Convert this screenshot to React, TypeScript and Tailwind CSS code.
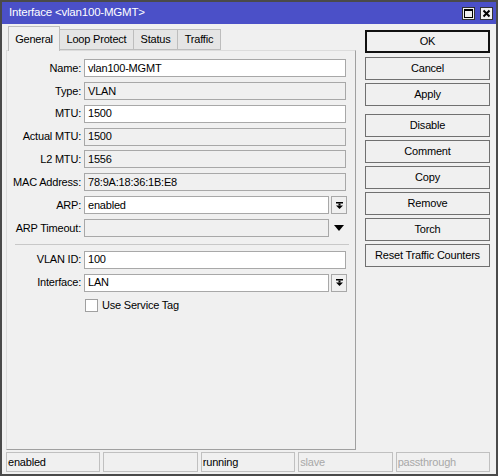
import React from "react";

const font = { fontFamily: '"Liberation Sans", Arial, sans-serif' };

function DropIcon() {
  return (
    <svg width="9" height="9" viewBox="0 0 9 9">
      <rect x="1" y="1" width="7" height="1.5" fill="#000" />
      <rect x="3.5" y="2.5" width="2" height="2" fill="#000" />
      <polygon points="1,4.5 8,4.5 4.5,8" fill="#000" />
    </svg>
  );
}

function Row({
  label,
  value,
  editable,
  drop,
  arrow,
}: {
  label: string;
  value: string;
  editable?: boolean;
  drop?: boolean;
  arrow?: boolean;
}) {
  return (
    <div className="flex items-center h-[18px]">
      <div className="w-[77px] text-right pr-[3px] whitespace-nowrap text-[#000]">{label}</div>
      <div
        className={`h-[18px] flex items-center px-[3px] border border-[#a8a8a8] ${
          editable ? "bg-white" : "bg-[#f0f0f0]"
        } ${drop || arrow ? "w-[245px]" : "w-[262px]"}`}
      >
        {value}
      </div>
      {drop && (
        <div className="ml-[2px] w-[16px] h-[18px] border border-[#a8a8a8] flex items-center justify-center">
          <DropIcon />
        </div>
      )}
      {arrow && (
        <div className="ml-[2px] w-[16px] h-[18px] flex items-center justify-center">
          <svg width="10" height="6" viewBox="0 0 10 6">
            <polygon points="0,0 10,0 5,6" fill="#000" />
          </svg>
        </div>
      )}
    </div>
  );
}

function Btn({ children, ok }: { children: React.ReactNode; ok?: boolean }) {
  return (
    <div
      className={`h-[23px] flex items-center justify-center text-[#000] bg-[#f0f0f0] ${
        ok ? "border-2 border-[#111] mb-[1px]" : "border border-[#707070]"
      }`}
    >
      {children}
    </div>
  );
}

export default function App() {
  return (
    <div
      className="w-[498px] h-[476px] bg-[#f0f0f0] border-2 border-[#4a4a4a] flex flex-col text-[11px] tracking-[-0.2px] text-[#000] overflow-hidden"
      style={font}
    >
      <div className="h-[22px] bg-[#4b50c8] flex items-center pl-[7px] pr-[3px] text-white shrink-0">
        <div className="flex-1 text-[11.5px]">Interface &lt;vlan100-MGMT&gt;</div>
        <div className="flex gap-[5px] mt-[1px]">
          <div className="w-[13px] h-[13px] bg-[#f0f0f0] border border-[#333] flex items-center justify-center">
            <div className="w-[9px] h-[9px] border border-black border-t-2" />
          </div>
          <div className="w-[13px] h-[13px] bg-[#f0f0f0] border border-[#333] flex items-center justify-center">
            <svg width="9" height="9" viewBox="0 0 9 9">
              <path d="M1.5 1.5 L7.5 7.5 M7.5 1.5 L1.5 7.5" stroke="#000" strokeWidth="2" />
            </svg>
          </div>
        </div>
      </div>

      <div className="flex flex-1 pl-[4px] pr-[6px]">
        <div className="w-[350px] flex flex-col">
          <div className="flex items-end h-[26px] pt-[2px] pl-[2px]">
            <div className="h-[25px] w-[52px] flex items-center justify-center bg-[#f0f0f0] border border-b-0 border-[#bdbdbd] relative top-[1px] z-10">
              General
            </div>
            <div className="h-[21px] w-[74px] flex items-center justify-center bg-[#e5e5e5] border border-l-0 border-[#bdbdbd]">
              Loop Protect
            </div>
            <div className="h-[21px] w-[44px] flex items-center justify-center bg-[#e5e5e5] border border-l-0 border-[#bdbdbd]">
              Status
            </div>
            <div className="h-[21px] w-[43px] flex items-center justify-center bg-[#e5e5e5] border border-l-0 border-[#bdbdbd]">
              Traffic
            </div>
          </div>
          <div className="flex-1 border border-[#a0a0a0] border-l-[#dcdcdc] border-t-[#dcdcdc] mb-[2px] flex flex-col pt-[8px] gap-[4.86px]">
            <Row label="Name:" value="vlan100-MGMT" editable />
            <Row label="Type:" value="VLAN" />
            <Row label="MTU:" value="1500" editable />
            <Row label="Actual MTU:" value="1500" />
            <Row label="L2 MTU:" value="1556" />
            <Row label="MAC Address:" value="78:9A:18:36:1B:E8" />
            <Row label="ARP:" value="enabled" editable drop />
            <Row label="ARP Timeout:" value="" arrow />
            <div className="ml-[8px] mr-[6px] border-t border-[#c8c8c8] mt-[2px] mb-[1px]" />
            <Row label="VLAN ID:" value="100" editable />
            <Row label="Interface:" value="LAN" editable drop />
            <div className="flex items-center h-[18px] pl-[78px]">
              <div className="w-[13px] h-[13px] bg-white border border-[#a0a0a0]" />
              <div className="ml-[4px]">Use Service Tag</div>
            </div>
          </div>
        </div>

        <div className="flex-1 pl-[9px] pt-[6px] flex flex-col">
          <div className="flex flex-col gap-[3px]">
            <Btn ok>OK</Btn>
            <Btn>Cancel</Btn>
            <Btn>Apply</Btn>
          </div>
          <div className="flex flex-col gap-[3px] mt-[8px]">
            <Btn>Disable</Btn>
            <Btn>Comment</Btn>
            <Btn>Copy</Btn>
            <Btn>Remove</Btn>
            <Btn>Torch</Btn>
            <Btn>Reset Traffic Counters</Btn>
          </div>
        </div>
      </div>

      <div className="h-[22px] flex gap-[3px] pl-[4px] pr-[6px] pb-[2px] shrink-0">
        {[
          { t: "enabled", c: "text-[#000]" },
          { t: "", c: "" },
          { t: "running", c: "text-[#000]" },
          { t: "slave", c: "text-[#a8a8a8]" },
          { t: "passthrough", c: "text-[#a8a8a8]" },
        ].map((s, i) => (
          <div
            key={i}
            className={`flex-1 border border-[#c0c0c0] flex items-center pl-[1px] ${s.c}`}
          >
            {s.t}
          </div>
        ))}
      </div>
    </div>
  );
}
